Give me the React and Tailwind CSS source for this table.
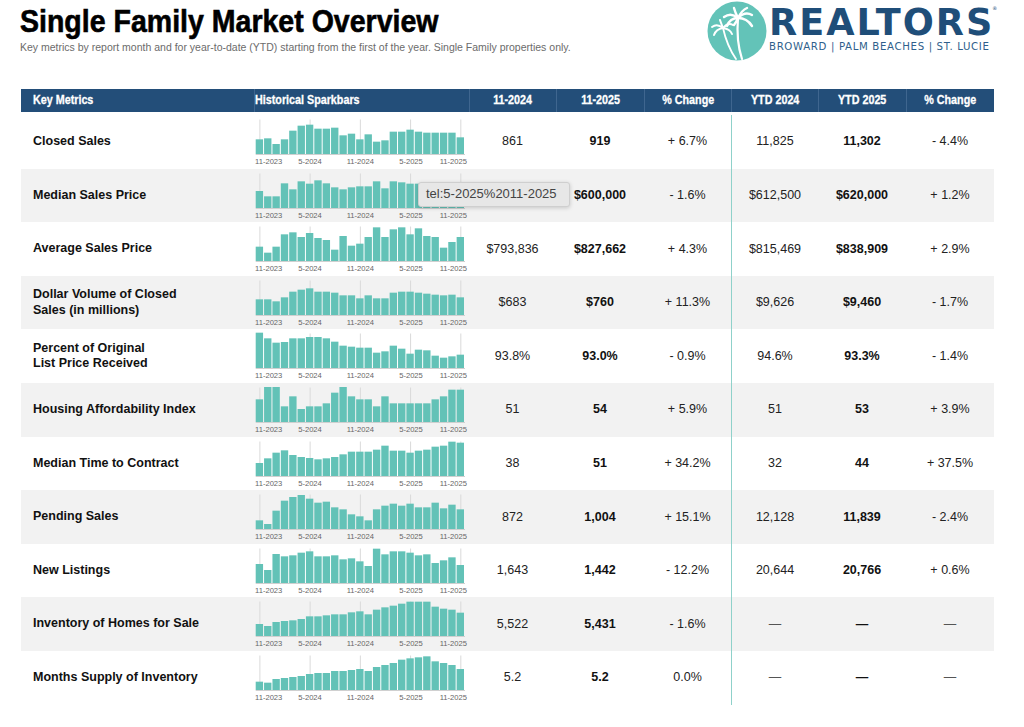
import React from "react";

const bars = {
  closed: [44, 47, 30, 44, 70, 85, 88, 76, 76, 79, 56, 61, 44, 59, 37, 41, 67, 67, 73, 67, 64, 64, 64, 64, 50],
  median: [51, 35, 35, 74, 56, 80, 73, 83, 74, 62, 56, 62, 65, 65, 80, 59, 80, 77, 73, 73, 73, 71, 75, 73, 71],
  average: [43, 25, 43, 80, 86, 72, 84, 69, 63, 34, 75, 46, 52, 72, 101, 72, 95, 101, 80, 98, 75, 72, 40, 57, 72],
  dollar: [47, 47, 41, 53, 70, 76, 80, 70, 70, 67, 59, 59, 50, 59, 50, 50, 67, 70, 70, 67, 64, 61, 59, 61, 53],
  pctList: [106, 89, 76, 78, 89, 89, 93, 93, 89, 79, 67, 64, 61, 61, 46, 50, 67, 58, 43, 55, 53, 37, 31, 35, 40],
  afford: [68, 105, 105, 47, 77, 39, 47, 47, 56, 88, 105, 77, 68, 68, 47, 77, 56, 56, 56, 56, 56, 68, 77, 97, 97],
  dom: [39, 53, 70, 77, 63, 57, 54, 50, 53, 57, 65, 73, 73, 73, 79, 91, 76, 76, 70, 76, 79, 88, 91, 103, 100],
  pending: [26, 15, 55, 85, 96, 102, 91, 79, 82, 65, 59, 44, 38, 26, 59, 70, 76, 70, 76, 65, 65, 79, 62, 73, 59],
  newList: [57, 39, 87, 80, 83, 91, 95, 80, 80, 83, 71, 74, 65, 51, 103, 86, 95, 95, 91, 83, 86, 60, 68, 77, 54],
  inventory: [36, 30, 42, 45, 47, 51, 59, 59, 62, 65, 65, 71, 74, 65, 79, 86, 91, 97, 103, 103, 103, 88, 82, 79, 70],
  supply: [25, 22, 33, 36, 39, 42, 48, 51, 51, 57, 57, 60, 63, 57, 69, 75, 81, 91, 95, 98, 101, 86, 81, 75, 63],
};

const DASH = "\u2014";

const rows = [
  { label: ["Closed Sales"], data: bars.closed, v: ["861", "919", "+ 6.7%", "11,825", "11,302", "- 4.4%"] },
  // 11-2024 value sits under the tooltip
  { label: ["Median Sales Price"], data: bars.median, v: ["", "$600,000", "- 1.6%", "$612,500", "$620,000", "+ 1.2%"], tip: true },
  { label: ["Average Sales Price"], data: bars.average, v: ["$793,836", "$827,662", "+ 4.3%", "$815,469", "$838,909", "+ 2.9%"] },
  { label: ["Dollar Volume of Closed", "Sales (in millions)"], data: bars.dollar, v: ["$683", "$760", "+ 11.3%", "$9,626", "$9,460", "- 1.7%"] },
  { label: ["Percent of Original", "List Price Received"], data: bars.pctList, v: ["93.8%", "93.0%", "- 0.9%", "94.6%", "93.3%", "- 1.4%"] },
  { label: ["Housing Affordability Index"], data: bars.afford, v: ["51", "54", "+ 5.9%", "51", "53", "+ 3.9%"] },
  { label: ["Median Time to Contract"], data: bars.dom, v: ["38", "51", "+ 34.2%", "32", "44", "+ 37.5%"] },
  { label: ["Pending Sales"], data: bars.pending, v: ["872", "1,004", "+ 15.1%", "12,128", "11,839", "- 2.4%"] },
  { label: ["New Listings"], data: bars.newList, v: ["1,643", "1,442", "- 12.2%", "20,644", "20,766", "+ 0.6%"] },
  { label: ["Inventory of Homes for Sale"], data: bars.inventory, v: ["5,522", "5,431", "- 1.6%", DASH, DASH, DASH] },
  { label: ["Months Supply of Inventory"], data: bars.supply, v: ["5.2", "5.2", "0.0%", DASH, DASH, DASH] },
];

const Sparkbars = ({ data }) => {
  const x0 = 1.7;
  const bw = 8.372;
  const base = 39;
  const ticks = [0, 6, 12, 18, 24];
  return (
    <svg width="215" height="53" className="block">
      {ticks.map((i) => (
        <line key={i} x1={x0 + (i + 0.5) * bw} x2={x0 + (i + 0.5) * bw} y1="4.5" y2={base} stroke="#dadada" strokeWidth="1" />
      ))}
      {data.map((h, i) => (
        <rect key={i} x={x0 + i * bw} y={base - h / 3} width={bw - 1} height={h / 3} fill="#63c2b7" />
      ))}
      <line x1={x0} x2={x0 + 25 * bw} y1={base + 0.5} y2={base + 0.5} stroke="#d0d0d0" strokeWidth="1" />
      <g fontFamily="Liberation Sans, Arial, sans-serif" fontSize="7.6" fill="#666">
        <text x="1" y="48.7">11-2023</text>
        <text x="56" y="48.7" textAnchor="middle">5-2024</text>
        <text x="106.3" y="48.7" textAnchor="middle">11-2024</text>
        <text x="157" y="48.7" textAnchor="middle">5-2025</text>
        <text x="213" y="48.7" textAnchor="end">11-2025</text>
      </g>
    </svg>
  );
};

const PalmLogo = () => (
  <svg width="60" height="60" viewBox="0 0 60 60" className="block">
    <circle cx="30" cy="30" r="29.5" fill="#63c3b8" />
    <g fill="none" stroke="#fff" strokeLinecap="round">
      <path d="M31 17 Q29 40 35 58" strokeWidth="2.2" />
      <path d="M16 27 Q20 45 29 58" strokeWidth="1.8" />
      <g strokeWidth="2.4">
        <path d="M31 17 Q24 11 17 16" />
        <path d="M31 17 Q23 17 20 25" />
        <path d="M31 17 Q38 10 45 14" />
        <path d="M31 17 Q40 17 45 25" />
        <path d="M31 17 Q28 11 27 7" />
        <path d="M31 17 Q35 9 40 7" />
        <path d="M31 17 Q30 20 27 24" />
      </g>
      <g strokeWidth="2">
        <path d="M16 27 Q10 22 5 26" />
        <path d="M16 27 Q9 28 7 34" />
        <path d="M16 27 Q21 21 26 24" />
        <path d="M16 27 Q23 28 25 33" />
        <path d="M16 27 Q14 22 13 19" />
      </g>
    </g>
  </svg>
);

const headers = ["11-2024", "11-2025", "% Change", "YTD 2024", "YTD 2025", "% Change"];

export default function App() {
  return (
    <div className="w-[1024px] min-h-[727px] bg-white overflow-hidden font-['Liberation_Sans',Arial,sans-serif]">
      <div className="flex h-[89px]">
        <div className="w-[707px] pl-[20px]">
          <h1 className="mt-[6px] inline-block origin-left scale-x-[0.92] whitespace-nowrap text-[31px] leading-[32px] font-bold text-black [-webkit-text-stroke:0.6px_black]">
            Single Family Market Overview
          </h1>
          <p className="mt-[2px] text-[10.5px] leading-[12px] text-[#6b6b6b]">
            Key metrics by report month and for year-to-date (YTD) starting from the first of the year. Single Family properties only.
          </p>
        </div>
        <div className="flex gap-[2px] pt-[1px]">
          <PalmLogo />
          <div className="text-[#1f4e79] font-['DejaVu_Sans',sans-serif]">
            <div className="mt-[4px] flex items-start h-[37px] text-[36.6px] leading-none font-bold tracking-[2px]">
              REALTORS
              <span className="text-[5px] leading-none font-normal tracking-normal mt-[1px] -ml-[2px]">®</span>
            </div>
            <div className="text-[10.2px] leading-none tracking-[0.65px] text-[#2f5f8c]">
              BROWARD | PALM BEACHES | ST. LUCIE
            </div>
          </div>
        </div>
      </div>

      <div className="ml-[21px] w-[973px]">
        <div className="grid grid-cols-[233px_215px_87px_88px_87px_87px_88px_88px] h-[23px] bg-[#234e79] text-white text-[12.5px] font-bold [-webkit-text-stroke:0.3px_white]">
          <div className="flex items-center pl-[12px]">
            <span className="inline-block origin-left scale-x-[0.86] whitespace-nowrap">Key Metrics</span>
          </div>
          <div className="flex items-center border-l border-[#3f668f]">
            <span className="inline-block origin-left scale-x-[0.86] whitespace-nowrap">Historical Sparkbars</span>
          </div>
          {headers.map((h, i) => (
            <div key={i} className="flex items-center justify-center border-l border-[#3f668f]">
              <span className="inline-block scale-x-[0.86] whitespace-nowrap">{h}</span>
            </div>
          ))}
        </div>

        <div className="mt-[3px]">
          {rows.map((r, ri) => (
            <div
              key={ri}
              className={`relative grid grid-cols-[233px_215px_87px_88px_87px_87px_88px_88px] h-[53.6px] ${ri % 2 === 1 ? "bg-[#f2f2f2]" : "bg-white"}`}
            >
              <div className="flex flex-col justify-center pl-[12px] text-[12.5px] leading-[15.5px] font-bold text-[#111]">
                {r.label.map((l, li) => (
                  <span key={li}>{l}</span>
                ))}
              </div>
              <div className="flex items-start">
                <Sparkbars data={r.data} />
              </div>
              {r.v.map((val, vi) => {
                const bold = vi === 1 || vi === 4;
                const dash = val === DASH;
                return (
                  <div
                    key={vi}
                    className={`flex items-center justify-center text-[12.5px] ${vi === 3 ? "border-l border-[#8fd1ca]" : ""} ${bold ? "font-bold text-[#111]" : dash ? "text-[#555]" : "text-[#222]"}`}
                  >
                    {val}
                  </div>
                );
              })}
              {r.tip && (
                <div className="absolute left-[397px] top-[13px] z-10 w-[152px] h-[25px] flex items-center pl-[7px] rounded-[3px] border border-[#cfcfcf] bg-[#e7e7e7] text-[13px] text-[#444] shadow-[0_1px_4px_rgba(0,0,0,0.18)]">
                  tel:5-2025%2011-2025
                </div>
              )}
            </div>
          ))}
        </div>
      </div>
    </div>
  );
}
